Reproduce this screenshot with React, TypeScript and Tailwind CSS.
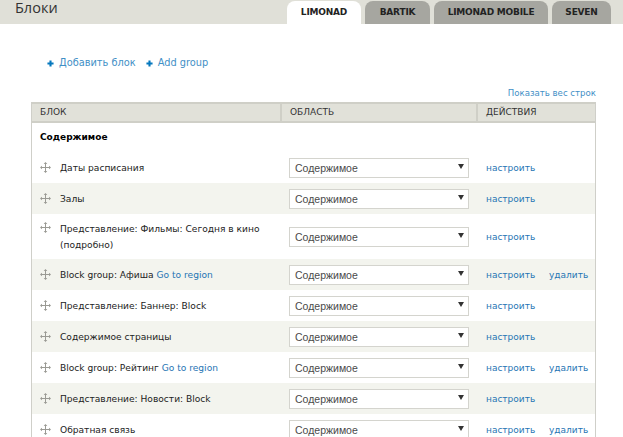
const tabs = [
  { name: "LIMONAD", active: true, width: "w-[74px]" },
  { name: "BARTIK", active: false, width: "w-[65px]" },
  { name: "LIMONAD MOBILE", active: false, width: "w-[114px]" },
  { name: "SEVEN", active: false, width: "w-[59px]" },
];

type Row = { title: string; link?: boolean; remove?: boolean; tall?: boolean };

const rows: Row[] = [
  { title: "Даты расписания" },
  { title: "Залы" },
  { title: "Представление: Фильмы: Сегодня в кино (подробно)", tall: true },
  { title: "Block group: Афиша", link: true, remove: true },
  { title: "Представление: Баннер: Block" },
  { title: "Содержимое страницы" },
  { title: "Block group: Рейтинг", link: true, remove: true },
  { title: "Представление: Новости: Block" },
  { title: "Обратная связь", remove: true },
];

function DragHandle() {
  return (
    <svg width="11" height="11" viewBox="0 0 11 11" className="shrink-0 text-[#9a9a94]">
      <path d="M5.5 0 7.3 2H3.7ZM5.5 11 3.7 9H7.3ZM0 5.5 2 3.7V7.3ZM11 5.5 9 7.3V3.7Z" fill="currentColor" />
      <path d="M5.5 1.5V9.5M1.5 5.5H9.5" stroke="currentColor" strokeWidth="1" />
    </svg>
  );
}

function PlusIcon() {
  return (
    <svg width="7" height="7" viewBox="0 0 8 8" className="shrink-0">
      <path d="M4 .5V7.5M.5 4H7.5" stroke="#0678be" strokeWidth="2.4" />
    </svg>
  );
}

function RegionSelect() {
  return (
    <div className="flex h-5 w-[180px] items-center justify-between border border-[#d4d4ce] bg-white pl-[5px] pr-[4px] font-['Liberation_Sans',sans-serif] text-[10.5px] text-[#4a4a4a]">
      <span>Содержимое</span>
      <svg width="6" height="5" viewBox="0 0 6 5" className="mb-0.5">
        <path d="M0 0H6L3 5Z" fill="#333" />
      </svg>
    </div>
  );
}

export default function App() {
  return (
    <div className="h-[437px] w-[623px] overflow-hidden bg-white font-['DejaVu_Sans',sans-serif]">
      {/* Header */}
      <div className="flex h-6 items-start justify-between bg-[#e0e0d8] pl-[15px] pr-[12px]">
        <h1 className="font-['Open_Sans',sans-serif] text-[14.5px] leading-[16px] text-[#333]">Блоки</h1>
        <div className="mt-px flex h-[24px] gap-1">
          {tabs.map((tab) => (
            <div
              key={tab.name}
              className={`flex items-center justify-center rounded-t-lg text-[9px] font-bold tracking-[-0.2px] text-[#222] ${tab.width} ${
                tab.active ? "bg-white" : "h-[23px] bg-[#a6a6a0]"
              }`}
            >
              {tab.name}
            </div>
          ))}
        </div>
      </div>

      <div className="pl-[31px] pr-[27px]">
        {/* Actions */}
        <div className="flex gap-[10px] pl-4 pt-8 text-[9.8px] leading-[14px] text-[#3f8fc6]">
          <a className="flex items-center gap-[5px]"><PlusIcon />Добавить блок</a>
          <a className="flex items-center gap-[5px]"><PlusIcon />Add group</a>
        </div>

        <div className="mt-[17px] text-right text-[8.6px] leading-[12px] text-[#3f8fc6]">Показать вес строк</div>

        {/* Table */}
        <div className="mt-[3px] border-x border-[#cfcfc9]">
          <div className="flex h-[21px] items-center border-y-2 border-[#cfcfc7] bg-[#e1e1d9] text-[9px] text-[#333]">
            <div className="flex h-full w-[250px] items-center border-r-2 border-[#cfcfc7] pl-2">БЛОК</div>
            <div className="flex h-full w-[196px] items-center border-r-2 border-[#cfcfc7] pl-2">ОБЛАСТЬ</div>
            <div className="pl-2">ДЕЙСТВИЯ</div>
          </div>

          <div className="flex h-[29px] items-center pl-2 text-[9px] font-bold text-black">Содержимое</div>

          {rows.map((row, i) => (
            <div
              key={row.title}
              className={`flex items-center text-[9.1px] leading-[16px] text-[#222] ${row.tall ? "h-[45px]" : "h-[31px]"} ${
                i % 2 === 1 ? "bg-[#f3f4ee]" : "bg-white"
              }`}
            >
              <div className="flex w-[250px] items-start gap-[9px] pl-2">
                <div className={row.tall ? "pt-[1px]" : "pt-[2px]"}><DragHandle /></div>
                <div className="pr-2">
                  {row.title}
                  {row.link && <span className="text-[#1f74b4]"> Go to region</span>}
                </div>
              </div>
              <div className="w-[197px] pl-[7px]"><RegionSelect /></div>
              <div className="flex w-[116px] pl-[7px] text-[9px] text-[#1f74b4]">
                <span className="w-[63px]">настроить</span>
                {row.remove && <span>удалить</span>}
              </div>
            </div>
          ))}
        </div>
      </div>
    </div>
  );
}
